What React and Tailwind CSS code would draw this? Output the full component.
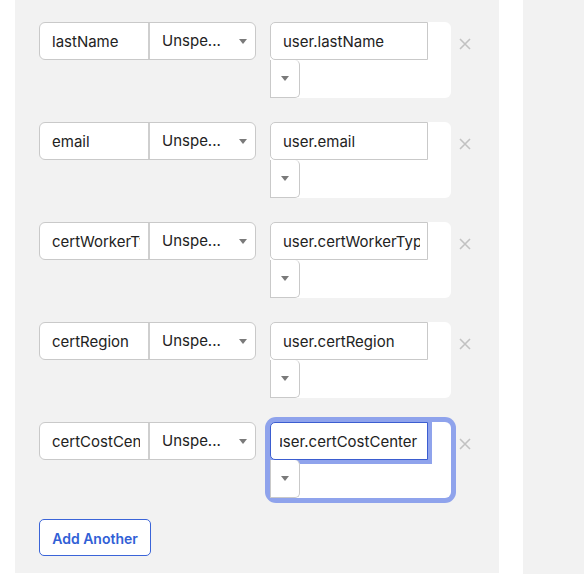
import React from "react";

const rows = [
  { name: "lastName", value: "user.lastName" },
  { name: "email", value: "user.email" },
  { name: "certWorkerType", value: "user.certWorkerType" },
  { name: "certRegion", value: "user.certRegion" },
  { name: "certCostCenter", value: "user.certCostCenter", focused: true },
];

function Caret() {
  return (
    <svg width="8" height="5" viewBox="0 0 8 5" className="shrink-0">
      <path d="M0 0 L8 0 L4 5 Z" fill="#7a7a7a" />
    </svg>
  );
}

function Row({ name, value, focused }) {
  return (
    <div className="flex items-start">
      <div className="flex h-[38px] w-[217px] rounded-[6px] border border-[#c9c9c9] bg-white">
        <div className="w-[108px] overflow-hidden pl-[12px] pr-[8px]">
          <div className="overflow-hidden whitespace-nowrap pt-[1px] text-[15px] leading-[35px] text-[#222]">
            {name}
          </div>
        </div>
        <div className="w-[2px] bg-[#cfcfcf]" />
        <div className="flex flex-1 items-center justify-between pl-[12px] pr-[8px]">
          <span className="pt-[1px] text-[15px] text-[#222]">Unspe...</span>
          <Caret />
        </div>
      </div>
      <div
        className={
          "ml-[14px] w-[181px] rounded-[6px] bg-white " +
          (focused ? "ring-[5px] ring-[#8fa3ec]" : "")
        }
      >
        <div
          className={
            "relative h-[38px] w-[158px] rounded-l-[5px] border bg-white " +
            (focused
              ? "z-0 border-[#3b5dd0] ring-4 ring-[#8fa3ec]"
              : "border-[#c9c9c9]")
          }
        >
          {focused ? (
            <div className="ml-[9px] mr-[7px] overflow-hidden whitespace-nowrap pt-[1px] text-[15px] leading-[35px] text-[#222]">
              <span className="ml-[-6px]">{value}</span>
            </div>
          ) : (
            <div className="ml-[12px] mr-[7px] overflow-hidden whitespace-nowrap pt-[1px] text-[15px] leading-[35px] text-[#222]">
              {value}
            </div>
          )}
        </div>
        <div className="relative z-10 flex h-[38px] w-[30px] items-center justify-center rounded-r-[5px] border border-t-0 border-[#c9c9c9] bg-white">
          <Caret />
        </div>
      </div>
      <div className="ml-[8px] mt-[16px] flex h-[12px] w-[12px] items-center justify-center">
        <svg width="12" height="12" viewBox="0 0 12 12">
          <path d="M1 1 L11 11 M11 1 L1 11" stroke="#c2c2c2" strokeWidth="1.6" />
        </svg>
      </div>
    </div>
  );
}

export default function App() {
  return (
    <div
      className="flex h-[574px] w-[584px] bg-white"
      style={{ fontFamily: "Inter, 'Noto Sans', sans-serif" }}
    >
      <div className="ml-[15px] h-[573px] w-[484px] bg-[#f2f2f2] pl-[24px] pt-[22px]">
        <div className="flex flex-col gap-[24px]">
          {rows.map((r) => (
            <Row key={r.name} {...r} />
          ))}
        </div>
        <button className="mt-[21px] h-[37px] w-[112px] rounded-[5px] border border-[#3a64d8] bg-white pt-[1px] text-[14px] font-semibold text-[#3160d6]">
          Add Another
        </button>
      </div>
      <div className="ml-[24px] h-[574px] flex-1 bg-[#f2f2f2]" />
    </div>
  );
}
